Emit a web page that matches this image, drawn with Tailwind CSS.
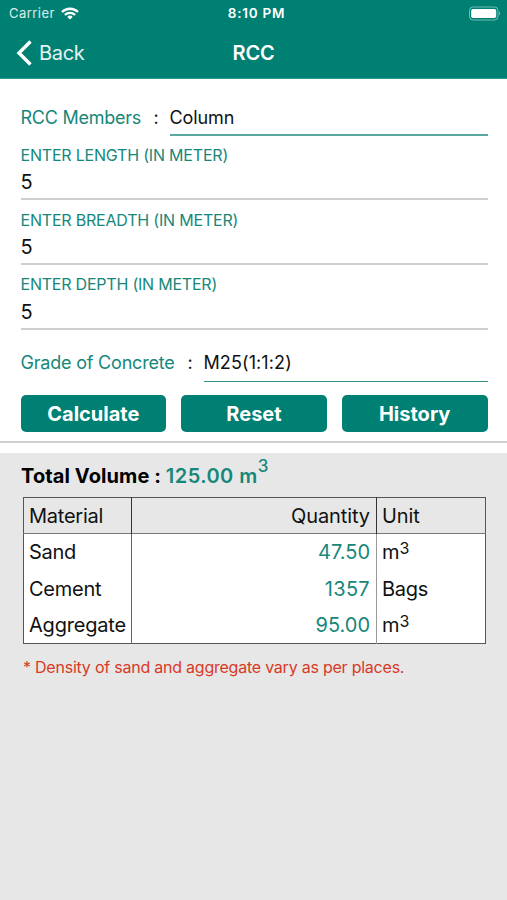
<!DOCTYPE html>
<html lang="en">
<head>
    <meta charset="UTF-8">
    <meta name="viewport" content="width=device-width, initial-scale=1.0">
    <title>RCC</title>
    <script src="https://cdn.jsdelivr.net/npm/@tailwindcss/browser@4"></script>
</head>
<body class="bg-[#e7e7e7] font-['Inter',sans-serif] text-[#111] h-[900px] overflow-hidden whitespace-nowrap">
    <header class="bg-[#008073] text-white h-[79px] border-b border-[#2f978c]">
        <div class="grid grid-cols-3 items-center h-[27px] pl-[9px] pr-[6px]">
            <div class="flex items-center gap-[6px] text-[13px] text-white/85">
                <span class="tracking-[0.45px]">Carrier</span>
                <svg class="w-[18px] h-[13px]" viewBox="0 0 18 13" fill="none" stroke="white" stroke-width="2.4">
                    <path d="M1 5a11.4 11.4 0 0 1 16 0M3.9 8a7.3 7.3 0 0 1 10.2 0" />
                    <path d="M9 12.6L6.3 9.9a3.9 3.9 0 0 1 5.4 0z" fill="white" stroke="none" />
                </svg>
            </div>
            <div class="text-center text-[13.5px] font-semibold pl-[3px]"><span class="tracking-[0.75px]">8:10 PM</span></div>
            <svg class="justify-self-end w-[33px] h-[15px]" viewBox="0 0 33 15">
                <rect x="1.5" y="1" width="28.5" height="13" rx="3.5" fill="none" stroke="white" stroke-opacity="0.45" />
                <rect x="3.2" y="2.9" width="25" height="9.2" rx="1.8" fill="white" />
                <path d="M31 5.5q2 2 0 4z" fill="white" fill-opacity="0.5" />
            </svg>
        </div>
        <div class="grid grid-cols-3 items-center h-[51px] px-[16px]">
            <div class="flex items-center gap-[7px] text-[20px] text-white/90">
                <svg class="w-[16px] h-[26px]" viewBox="0 0 16 26" fill="none" stroke="white" stroke-width="3.4">
                    <path d="M14.5 1.5L3 13l11.5 11.5" />
                </svg>
                <span class="tracking-[-0.3px]">Back</span>
            </div>
            <h1 class="text-center text-[20px] font-semibold tracking-[-0.2px]">RCC</h1>
        </div>
    </header>

    <main class="bg-white h-[374px] pl-[20.5px] pr-[19.5px] pt-[20px] flex flex-col">
        <div class="flex h-[37px] text-[18px]">
            <div class="w-[149px] flex pt-1 leading-[29px]">
                <span class="w-[133px] text-[#16877a] tracking-[-0.25px]">RCC Members</span>
                <span>:</span>
            </div>
            <div class="flex-1 border-b-2 border-[#5aa9a1] pt-1 leading-[29px] tracking-[-0.1px]">Column</div>
        </div>

        <label class="block h-[64px] border-b-2 border-[#cfcfcf]">
            <span class="block pt-[9px] text-[16px] leading-[20px] tracking-[-0.2px] text-[#16877a]">ENTER LENGTH (IN METER)</span>
            <span class="block pt-[4px] text-[20px] leading-[26px]">5</span>
        </label>
        <label class="block h-[65px] border-b-2 border-[#cfcfcf]">
            <span class="block pt-[10px] text-[16px] leading-[20px] tracking-[-0.2px] text-[#16877a]">ENTER BREADTH (IN METER)</span>
            <span class="block pt-[4px] text-[20px] leading-[26px]">5</span>
        </label>
        <label class="block h-[65px] border-b-2 border-[#cfcfcf]">
            <span class="block pt-[9px] text-[16px] leading-[20px] tracking-[-0.22px] text-[#16877a]">ENTER DEPTH (IN METER)</span>
            <span class="block pt-[5px] text-[20px] leading-[26px]">5</span>
        </label>

        <div class="flex h-[34px] mt-[18px] text-[18px]">
            <div class="w-[183px] flex leading-[30px]">
                <span class="w-[167px] text-[#16877a] tracking-[-0.2px]">Grade of Concrete</span>
                <span>:</span>
            </div>
            <div class="flex-1 border-b border-[#2f9185] leading-[30px] tracking-[0.1px]">M25(1:1:2)</div>
        </div>

        <div class="grid grid-cols-3 gap-[15px] mt-[13px] text-[20px] font-bold text-white">
            <button class="h-[37px] rounded-[5px] bg-[#008073]">Calculate</button>
            <button class="h-[37px] rounded-[5px] bg-[#008073]">Reset</button>
            <button class="h-[37px] rounded-[5px] bg-[#008073]">History</button>
        </div>
        <div class="-ml-[20.5px] -mr-[19.5px] mt-[9px] h-[2px] bg-[#cfcfcf]"></div>
    </main>

    <section class="pl-[23px] pr-[21px]">
        <h2 class="h-[44px] -ml-[2px] text-[20px] leading-[47px] font-bold text-black">
            <span class="tracking-[0.1px]">Total Volume :</span>
            <span class="font-semibold text-[#16877a]"><span class="tracking-[0.45px]">125.00 m</span><sup class="text-[17px] leading-none font-medium -top-[11px]">3</sup></span>
        </h2>

        <table class="w-full table-fixed border-collapse border border-[#555] text-[20px] leading-[24px]">
            <colgroup>
                <col class="w-[108px]">
                <col class="w-[245px]">
                <col>
            </colgroup>
            <thead>
                <tr class="h-[36px] border-b border-[#777] text-left">
                    <th class="pl-[5px] font-normal tracking-[-0.25px] border-r border-[#333]">Material</th>
                    <th class="pr-[6px] font-normal tracking-[-0.1px] text-right border-r border-[#333]">Quantity</th>
                    <th class="pl-[5px] font-normal tracking-[-0.1px]">Unit</th>
                </tr>
            </thead>
            <tbody class="bg-white">
                <tr class="h-[37px]">
                    <td class="pl-[5px] tracking-[-0.3px] border-r border-[#666]">Sand</td>
                    <td class="pr-[6px] text-right text-[#16877a] border-r border-[#999]">47.50</td>
                    <td class="pl-[5px]">m<sup class="text-[16px] leading-none -top-[5px]">3</sup></td>
                </tr>
                <tr class="h-[37px]">
                    <td class="pl-[5px] tracking-[-0.25px] border-r border-[#666]">Cement</td>
                    <td class="pr-[6px] text-right tracking-[0.3px] text-[#16877a] border-r border-[#999]">1357</td>
                    <td class="pl-[5px] tracking-[-0.25px]">Bags</td>
                </tr>
                <tr class="h-[36px]">
                    <td class="pl-[5px] tracking-[-0.2px] border-r border-[#666]">Aggregate</td>
                    <td class="pr-[6px] text-right text-[#16877a] border-r border-[#999]">95.00</td>
                    <td class="pl-[5px]">m<sup class="text-[16px] leading-none -top-[5px]">3</sup></td>
                </tr>
            </tbody>
        </table>

        <p class="mt-[12px] text-[16px] leading-[22px] tracking-[-0.23px] text-[#d83a26]">* Density of sand and aggregate vary as per places.</p>
    </section>
</body>
</html>
